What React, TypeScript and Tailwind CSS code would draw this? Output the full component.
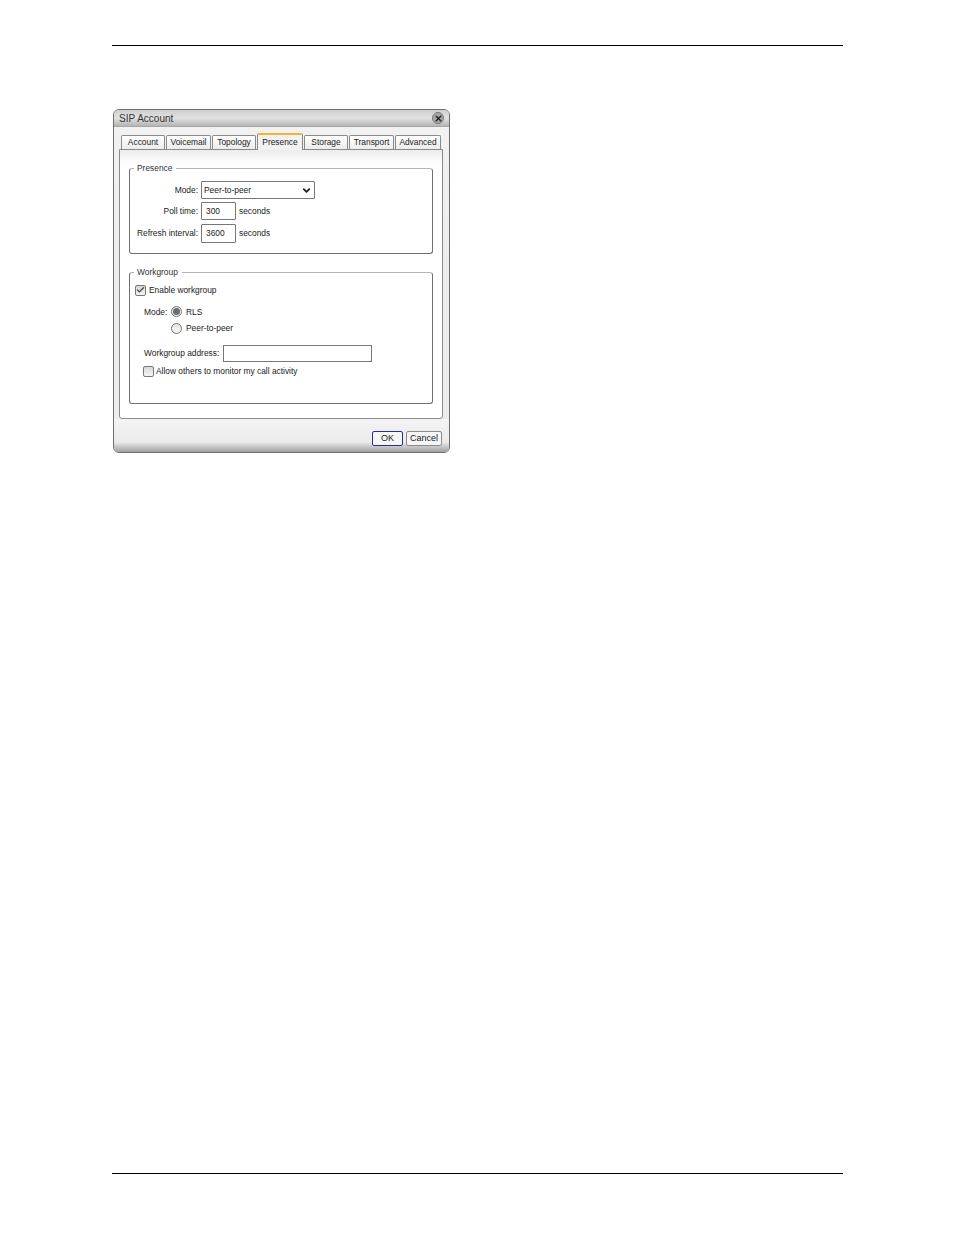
import { ChevronDown, Check, X } from "lucide-react";

const tabs = [
  { name: "Account", w: "w-[44px]" },
  { name: "Voicemail", w: "w-[45px]" },
  { name: "Topology", w: "w-[44px]" },
  { name: "Presence", w: "w-[46px]", active: true },
  { name: "Storage", w: "w-[44px]" },
  { name: "Transport", w: "w-[45px]" },
  { name: "Advanced", w: "w-[46px]" },
];

function Tab({ name, w, active }: { name: string; w: string; active?: boolean }) {
  if (active) {
    return (
      <div className={`${w} h-[17px] -mb-px z-10 flex items-center justify-center bg-[#f2f2f2] border-x border-[#888] border-t-2 border-t-[#f5b335] rounded-t-[2px]`}>
        {name}
      </div>
    );
  }
  return (
    <div className={`${w} h-[14px] flex items-center justify-center bg-gradient-to-b from-[#ffffff] to-[#ececec] border border-b-0 border-[#8a8a8a] rounded-t-[2px]`}>
      {name}
    </div>
  );
}

function Radio({ on }: { on?: boolean }) {
  return (
    <span className="w-[11px] h-[11px] rounded-full border border-[#777] bg-gradient-to-b from-[#e4e4e4] to-[#f8f8f8] flex items-center justify-center shrink-0">
      {on && <span className="w-[7px] h-[7px] rounded-full bg-[#6d6d6d]" />}
    </span>
  );
}

function Box({ on }: { on?: boolean }) {
  return (
    <span className="w-[11px] h-[11px] rounded-[2px] border border-[#777] bg-gradient-to-b from-[#d8d8d8] to-[#f4f4f4] flex items-center justify-center shrink-0">
      {on && <Check className="w-[10px] h-[10px] text-[#444]" strokeWidth={3.5} />}
    </span>
  );
}

function Group({ title, h, children }: { title: string; h: string; children: React.ReactNode }) {
  return (
    <fieldset className={`${h} border border-[#6f6f6f] border-t-[#b5b5b5] rounded-[3px] min-w-0`}>
      <legend className="ml-[4px] pl-[3px] pr-[4px] leading-[10px] text-[#333]">{title}</legend>
      {children}
    </fieldset>
  );
}

export default function App() {
  return (
    <div className="w-[954px] h-[1235px] bg-white pt-[45px] pl-[112px] text-[8.4px] text-[#222] [font-family:'Liberation_Sans',Arial,sans-serif]">
      <div className="w-[731px] h-px bg-black" />

      {/* dialog */}
      <div className="ml-px mt-[63px] w-[337px] h-[344px] flex flex-col rounded-[6px] border border-[#6e6e6e] bg-gradient-to-b from-[#f2f2f2] via-[#ececec] to-[#ececec] overflow-hidden">
        <div className="h-[17px] shrink-0 flex items-center justify-between pl-[5px] pr-[5px] border-b border-[#a8a8a8] bg-gradient-to-b from-[#cfcfcf] via-[#e2e2e2] to-[#b4b4b4] text-[10px] text-[#333]">
          <span>SIP Account</span>
          <span className="w-[12px] h-[12px] rounded-full bg-[#a8a8a8] border border-[#777] flex items-center justify-center">
            <X className="w-[9px] h-[9px] text-[#222]" strokeWidth={4} />
          </span>
        </div>

        <div className="flex items-end gap-px h-[19px] shrink-0 mt-[3px] pl-[7px]">
          {tabs.map((t) => (
            <Tab key={t.name} {...t} />
          ))}
        </div>

        <div className="ml-[5px] w-[324px] h-[270px] shrink-0 border border-[#8a8a8a] rounded-b-[3px] bg-gradient-to-b from-[#ececec] via-[#fafafa] to-[#ffffff] bg-[length:100%_20px] bg-no-repeat bg-white px-[9px] pt-[13px]">
          <Group title="Presence" h="h-[91px]">
            <div className="flex flex-col pt-[8px]">
              <div className="flex items-center h-[18px]">
                <span className="w-[68px] text-right">Mode:</span>
                <div className="ml-[3px] w-[114px] h-[18px] border border-[#777] rounded-[1px] flex items-center justify-between pl-[2px] pr-[2px] bg-white">
                  <span>Peer-to-peer</span>
                  <ChevronDown className="w-[11px] h-[11px] text-[#222]" strokeWidth={4} />
                </div>
              </div>
              <div className="flex items-center h-[18px] mt-[3px]">
                <span className="w-[68px] text-right">Poll time:</span>
                <div className="ml-[3px] w-[35px] h-[18px] border border-[#777] rounded-[1px] flex items-center pl-[4px] bg-white">300</div>
                <span className="ml-[3px]">seconds</span>
              </div>
              <div className="flex items-center h-[19px] mt-[4px]">
                <span className="w-[68px] text-right">Refresh interval:</span>
                <div className="ml-[3px] w-[35px] h-[19px] border border-[#777] rounded-[1px] flex items-center pl-[4px] bg-white">3600</div>
                <span className="ml-[3px]">seconds</span>
              </div>
            </div>
          </Group>

          <div className="h-[13px]" />

          <Group title="Workgroup" h="h-[137px]">
            <div className="flex items-center gap-[3px] pl-[5px] pt-[7px]">
              <Box on />
              <span>Enable workgroup</span>
            </div>
            <div className="flex items-center pl-[14px] mt-[9px]">
              <span className="w-[27px]">Mode:</span>
              <Radio on />
              <span className="ml-[4px]">RLS</span>
            </div>
            <div className="flex items-center pl-[41px] mt-[4px]">
              <Radio />
              <span className="ml-[4px]">Peer-to-peer</span>
            </div>
            <div className="flex items-center pl-[14px] mt-[10px]">
              <span className="w-[79px]">Workgroup address:</span>
              <div className="w-[149px] h-[17px] border border-[#777] bg-white" />
            </div>
            <div className="flex items-center gap-[2px] pl-[13px] mt-[3px]">
              <Box />
              <span>Allow others to monitor my call activity</span>
            </div>
          </Group>
        </div>

        <div className="flex-1 flex justify-end items-start gap-[3px] pt-[12px] pr-[7px] bg-gradient-to-b from-[#f4f4f4] via-[#ebebeb] via-70% to-[#a0a0a0] text-[9px]">
          <div className="w-[31px] h-[15px] border border-[#2a2a9a] rounded-[2px] bg-[#f6f6f6] flex items-center justify-center">OK</div>
          <div className="w-[36px] h-[15px] border border-[#8a8a8a] rounded-[2px] bg-[#f6f6f6] flex items-center justify-center">Cancel</div>
        </div>
      </div>

      <div className="mt-[720px] w-[731px] h-px bg-black" />
    </div>
  );
}
